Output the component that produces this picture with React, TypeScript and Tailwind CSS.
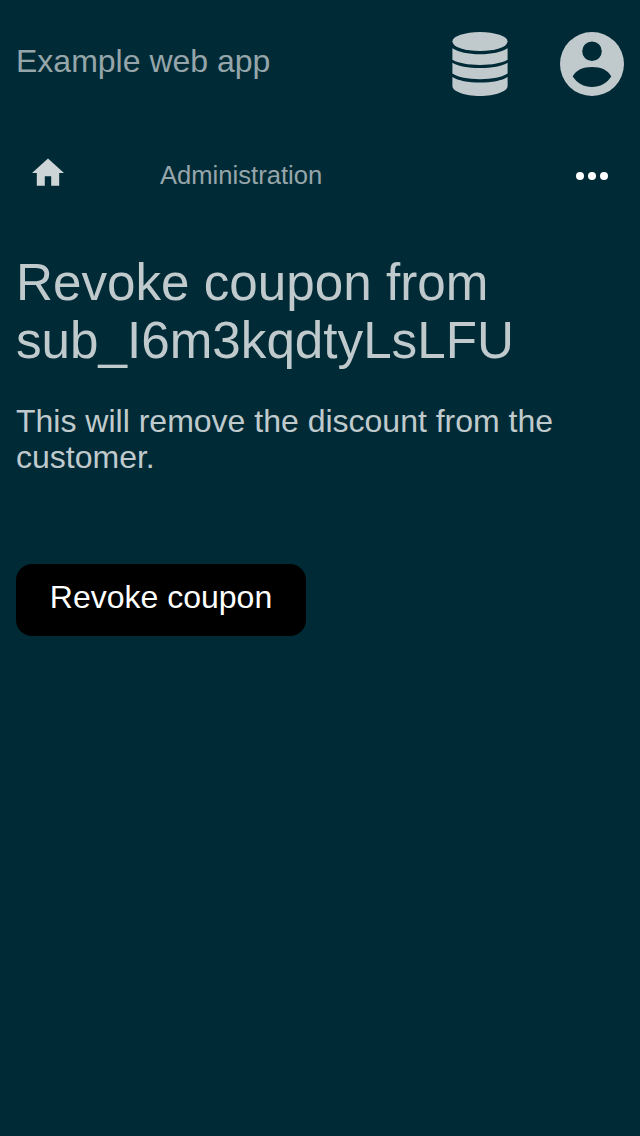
export default function App() {
  return (
    <div className="flex h-[1136px] w-[640px] flex-col bg-[#002b36] px-4 font-['Liberation_Sans',sans-serif] text-[#c0cacd]">
      <header className="flex h-32 items-center">
        <span className="mb-1.5 flex-1 text-[32px] leading-9 text-[#96a5aa]">Example web app</span>
        <svg className="mr-12 h-16 w-16" viewBox="0 0 64 64" fill="currentColor">
          <ellipse cx="32" cy="9.5" rx="27.600" ry="9.500" />
          <path d="M4.400 16.200C10 20 20 22.200 32 22.200s22-2.200 27.600-6V27.800C54 31.200 44 32.900 32 32.900S10 31.200 4.400 27.800z" />
          <path d="M4.400 30.700C10 34.100 20 36 32 36s22-1.900 27.600-5.300V41.500C54 45.200 44 47.200 32 47.200S10 45.200 4.400 41.500z" />
          <path d="M4.400 45C10 48.600 20 50.600 32 50.600s22-2 27.600-5.600v9C59.600 59.500 47 64 32 64S4.400 59.500 4.400 54z" />
        </svg>
        <svg className="h-16 w-16" viewBox="0 0 64 64" fill="currentColor">
          <path fillRule="evenodd" d="M32 0a32 32 0 1 0 0 64a32 32 0 1 0 0-64zM32 9.400a9.800 9.800 0 1 1 0 19.600a9.800 9.800 0 1 1 0-19.600zM12.700 44.500C16 38 23 34.900 32 34.900S48 38 51.300 44.500C47 51 40 55 32 55S17 51 12.700 44.500z" />
        </svg>
      </header>
      <nav className="flex h-24 items-center px-4">
        <svg className="mb-1.5 h-8 w-8" viewBox="2 2 20 20" fill="#cdd5d7">
          <path d="M10 20v-6h4v6h5v-8h3L12 3 2 12h3v8z" />
        </svg>
        <span className="mb-0.5 ml-24 flex-1 text-[25.6px] leading-8 text-[#96a5aa]">Administration</span>
        <svg className="h-8 w-8 text-white" viewBox="0 0 32 32" fill="currentColor">
          <circle cx="4" cy="16" r="4" /><circle cx="16" cy="16" r="4" /><circle cx="28" cy="16" r="4" />
        </svg>
      </nav>
      <main className="pt-[30px]">
        <h1 className="text-[51.2px] leading-[58px]">Revoke coupon from<br />sub_I6m3kqdtyLsLFU</h1>
        <p className="mt-[33px] text-[32px] leading-9">This will remove the discount from the customer.</p>
        <button className="mt-[89px] flex h-[72px] w-[290px] justify-center rounded-2xl bg-black pt-[15px] text-[32px] leading-9 text-white">Revoke coupon</button>
      </main>
    </div>
  );
}
